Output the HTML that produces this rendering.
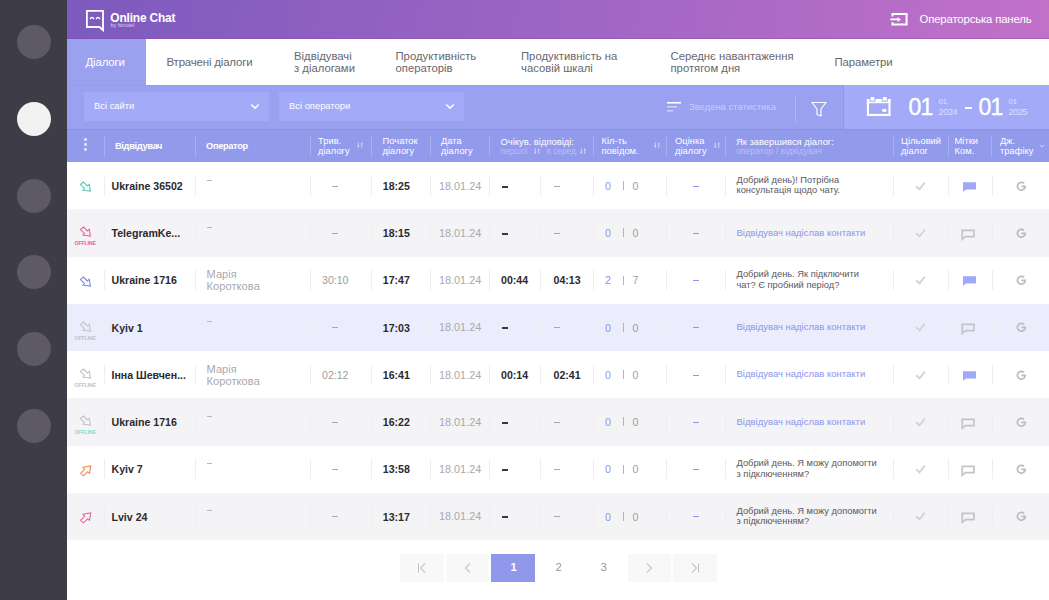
<!DOCTYPE html>
<html><head><meta charset="utf-8"><style>
html,body{margin:0;padding:0;width:1049px;height:600px;overflow:hidden;background:#fff;position:relative;font-family:"Liberation Sans", sans-serif;}
.t{position:absolute;white-space:nowrap;line-height:1;}
</style></head><body>
<div style="position:absolute;left:0px;top:0px;width:67px;height:600px;background:#3e3c46;"></div>
<div style="position:absolute;left:16.5px;top:25px;width:34px;height:34px;background:#5d5a65;border-radius:50%"></div>
<div style="position:absolute;left:16.5px;top:101.8px;width:34px;height:34px;background:#f2f2f2;border-radius:50%"></div>
<div style="position:absolute;left:16.5px;top:178.6px;width:34px;height:34px;background:#5d5a65;border-radius:50%"></div>
<div style="position:absolute;left:16.5px;top:255.39999999999998px;width:34px;height:34px;background:#5d5a65;border-radius:50%"></div>
<div style="position:absolute;left:16.5px;top:332.2px;width:34px;height:34px;background:#5d5a65;border-radius:50%"></div>
<div style="position:absolute;left:16.5px;top:409px;width:34px;height:34px;background:#5d5a65;border-radius:50%"></div>
<div style="position:absolute;left:67px;top:0px;width:982px;height:39px;background:linear-gradient(100deg,#7c5abe 0%,#9a64c3 45%,#c271c9 100%);"></div>
<div style="position:absolute;left:67px;top:38px;width:982px;height:1px;background:rgba(140,70,180,0.45);"></div>
<div style="position:absolute;left:67px;top:39px;width:982px;height:1px;background:rgba(160,110,200,0.25);"></div>
<svg style="position:absolute;left:84px;top:9px;" width="22" height="24" viewBox="0 0 22 24"><path d="M2.9 1.9 H19 V21.2 L15.6 18 H2.9 Z" fill="none" stroke="#fff" stroke-width="1.8" stroke-linejoin="miter"/><path d="M6.1 10 Q8 7.2 9.9 10 M12.1 10 Q14 7.2 15.9 10" fill="none" stroke="#fff" stroke-width="1.5"/></svg>
<div class="t" style="left:110.3px;top:12.53px;font-size:11.9px;color:#fff;font-weight:700;letter-spacing:-0.15px">Online Chat</div>
<div class="t" style="left:110.5px;top:23.06px;font-size:5.6px;color:rgba(255,255,255,0.7);font-weight:400;">by binotel</div>
<svg style="position:absolute;left:890px;top:12px;" width="19" height="15" viewBox="0 0 19 15"><path d="M2.5 4.6 V2.1 H16.6 V12.6 H2.5 V10.3" fill="none" stroke="#fff" stroke-width="2"/><path d="M0.4 6.6 H8 V8.2 H0.4 Z M7.6 5 L10.9 7.4 L7.6 9.9 Z" fill="#fff"/></svg>
<div class="t" style="left:919.5px;top:13.65px;font-size:11.4px;color:#fff;font-weight:400;letter-spacing:-0.17px">Операторська панель</div>
<div style="position:absolute;left:67px;top:39px;width:982px;height:46px;background:#ffffff;"></div>
<div style="position:absolute;left:67px;top:39px;width:79px;height:46px;background:#9aa2f0;"></div>
<div class="t" style="left:85.5px;top:56.97px;font-size:11.5px;color:#fff;font-weight:400;letter-spacing:-0.2px">Діалоги</div>
<div class="t" style="left:166.5px;top:56.97px;font-size:11.5px;color:#67676d;font-weight:400;letter-spacing:-0.2px">Втрачені діалоги</div>
<div class="t" style="left:294px;top:51.23px;font-size:11.3px;color:#67676d;font-weight:400;">Відвідувачі</div>
<div class="t" style="left:294px;top:62.63px;font-size:11.3px;color:#67676d;font-weight:400;">з діалогами</div>
<div class="t" style="left:395.5px;top:51.23px;font-size:11.3px;color:#67676d;font-weight:400;">Продуктивність</div>
<div class="t" style="left:395.5px;top:62.63px;font-size:11.3px;color:#67676d;font-weight:400;">операторів</div>
<div class="t" style="left:521px;top:51.23px;font-size:11.3px;color:#67676d;font-weight:400;">Продуктивність на</div>
<div class="t" style="left:521px;top:62.63px;font-size:11.3px;color:#67676d;font-weight:400;">часовій шкалі</div>
<div class="t" style="left:670.5px;top:51.23px;font-size:11.3px;color:#67676d;font-weight:400;">Середнє навантаження</div>
<div class="t" style="left:670.5px;top:62.63px;font-size:11.3px;color:#67676d;font-weight:400;">протягом дня</div>
<div class="t" style="left:834.5px;top:57.05px;font-size:11.4px;color:#67676d;font-weight:400;letter-spacing:-0.1px">Параметри</div>
<div style="position:absolute;left:67px;top:85px;width:982px;height:44px;background:#99a1f0;"></div>
<div style="position:absolute;left:67px;top:85px;width:982px;height:1px;background:#949cec;"></div>
<div style="position:absolute;left:67px;top:129px;width:982px;height:1px;background:#8a92e3;"></div>
<div style="position:absolute;left:84px;top:92px;width:185px;height:29px;background:#a3abf8;"></div>
<div class="t" style="left:94px;top:101.14px;font-size:9.4px;color:#fff;font-weight:400;">Всі сайти</div>
<svg style="position:absolute;left:249px;top:101px;" width="12" height="10" viewBox="0 0 12 10"><path d="M2.2 3.5 L6 7.1 L9.8 3.5" fill="none" stroke="#fff" stroke-width="1.5"/></svg>
<div style="position:absolute;left:279px;top:92px;width:185px;height:29px;background:#a3abf8;"></div>
<div class="t" style="left:289px;top:101.14px;font-size:9.4px;color:#fff;font-weight:400;">Всі оператори</div>
<svg style="position:absolute;left:444px;top:101px;" width="12" height="10" viewBox="0 0 12 10"><path d="M2.2 3.5 L6 7.1 L9.8 3.5" fill="none" stroke="#fff" stroke-width="1.5"/></svg>
<svg style="position:absolute;left:665px;top:100px;" width="18" height="14" viewBox="0 0 18 14"><rect x="2" y="2" width="14" height="1.6" fill="#fff"/><rect x="2" y="6" width="10" height="1.6" fill="rgba(255,255,255,0.5)"/><rect x="2" y="10" width="6" height="1.6" fill="rgba(255,255,255,0.5)"/></svg>
<div class="t" style="left:689px;top:102.40px;font-size:9.45px;color:#c9cdf9;font-weight:400;">Зведена статистика</div>
<div style="position:absolute;left:795px;top:97px;width:1px;height:25px;background:rgba(255,255,255,0.25);"></div>
<svg style="position:absolute;left:810px;top:100px;" width="18" height="18" viewBox="0 0 18 18"><path d="M2 2.5 H16 L11 9 V16 L7 14.5 V9 Z" fill="none" stroke="#fff" stroke-width="1.2" stroke-linejoin="round"/></svg>
<div style="position:absolute;left:843px;top:85px;width:1px;height:44px;background:#8f97e8;"></div>
<div style="position:absolute;left:844px;top:85px;width:205px;height:44px;background:#a3abf9;"></div>
<svg style="position:absolute;left:865px;top:95px;" width="28" height="24" viewBox="0 0 28 24"><rect x="1.9" y="4" width="23.6" height="4.2" fill="#fff"/><rect x="1.9" y="4" width="2.1" height="17" fill="#fff"/><rect x="23.4" y="4" width="2.1" height="17" fill="#fff"/><rect x="1.9" y="18.9" width="23.6" height="2.1" fill="#fff"/><rect x="5.1" y="1.4" width="4.8" height="4.8" fill="#fff" stroke="#9aa2f2" stroke-width="0.9"/><rect x="17.2" y="1.4" width="5" height="4.8" fill="#fff" stroke="#9aa2f2" stroke-width="0.9"/><rect x="17.3" y="14" width="4" height="2.8" fill="#fff"/></svg>
<div class="t" style="left:908.5px;top:95.73px;font-size:23px;color:#fff;font-weight:400;letter-spacing:-0.9px;-webkit-text-stroke:0.4px #fff">01</div>
<div class="t" style="left:938.5px;top:98.00px;font-size:7.8px;color:#dde0fc;font-weight:400;">01</div>
<div class="t" style="left:938.5px;top:108.18px;font-size:9px;color:#dde0fc;font-weight:400;letter-spacing:-0.3px">2024</div>
<div style="position:absolute;left:964.5px;top:106.5px;width:7px;height:2px;background:#fff;"></div>
<div class="t" style="left:978.5px;top:95.73px;font-size:23px;color:#fff;font-weight:400;letter-spacing:-0.9px;-webkit-text-stroke:0.4px #fff">01</div>
<div class="t" style="left:1008.5px;top:98.00px;font-size:7.8px;color:#dde0fc;font-weight:400;">01</div>
<div class="t" style="left:1008.5px;top:108.18px;font-size:9px;color:#dde0fc;font-weight:400;letter-spacing:-0.3px">2025</div>
<div style="position:absolute;left:67px;top:130px;width:982px;height:32px;background:#929aeb;"></div>
<div style="position:absolute;left:104px;top:136px;width:1px;height:20px;background:rgba(255,255,255,0.22);"></div>
<div style="position:absolute;left:195px;top:136px;width:1px;height:20px;background:rgba(255,255,255,0.22);"></div>
<div style="position:absolute;left:310px;top:136px;width:1px;height:20px;background:rgba(255,255,255,0.22);"></div>
<div style="position:absolute;left:371px;top:136px;width:1px;height:20px;background:rgba(255,255,255,0.22);"></div>
<div style="position:absolute;left:430px;top:136px;width:1px;height:20px;background:rgba(255,255,255,0.22);"></div>
<div style="position:absolute;left:489px;top:136px;width:1px;height:20px;background:rgba(255,255,255,0.22);"></div>
<div style="position:absolute;left:593px;top:136px;width:1px;height:20px;background:rgba(255,255,255,0.22);"></div>
<div style="position:absolute;left:666px;top:136px;width:1px;height:20px;background:rgba(255,255,255,0.22);"></div>
<div style="position:absolute;left:725px;top:136px;width:1px;height:20px;background:rgba(255,255,255,0.22);"></div>
<div style="position:absolute;left:893px;top:136px;width:1px;height:20px;background:rgba(255,255,255,0.22);"></div>
<div style="position:absolute;left:948px;top:136px;width:1px;height:20px;background:rgba(255,255,255,0.22);"></div>
<div style="position:absolute;left:991px;top:136px;width:1px;height:20px;background:rgba(255,255,255,0.22);"></div>
<div style="position:absolute;left:84px;top:138.3px;width:2.6px;height:2.6px;background:rgba(255,255,255,0.7);border-radius:50%"></div>
<div style="position:absolute;left:84px;top:143.3px;width:2.6px;height:2.6px;background:rgba(255,255,255,0.7);border-radius:50%"></div>
<div style="position:absolute;left:84px;top:148.3px;width:2.6px;height:2.6px;background:rgba(255,255,255,0.7);border-radius:50%"></div>
<div class="t" style="left:115px;top:141.93px;font-size:9.3px;color:#fff;font-weight:700;letter-spacing:-0.35px">Відвідувач</div>
<div class="t" style="left:206px;top:141.93px;font-size:9.3px;color:#fff;font-weight:700;letter-spacing:-0.35px">Оператор</div>
<div class="t" style="left:318px;top:136.73px;font-size:9.3px;color:#fff;font-weight:400;letter-spacing:0.05px">Трив.</div>
<div class="t" style="left:318px;top:146.53px;font-size:9.3px;color:#fff;font-weight:400;letter-spacing:0.05px">діалогу</div>
<svg style="position:absolute;left:357px;top:142px;" width="7" height="7" viewBox="0 0 7 7"><path d="M0.8 0.3 H1.7 V4 H0.8 Z M0 3.8 H2.5 L1.25 6.2 Z M4.3 2.2 H5.2 V6 H4.3 Z M3.5 2.4 H6 L4.75 0 Z" fill="rgba(255,255,255,0.6)"/></svg>
<div class="t" style="left:382.5px;top:136.73px;font-size:9.3px;color:#fff;font-weight:400;letter-spacing:0.05px">Початок</div>
<div class="t" style="left:382.5px;top:146.53px;font-size:9.3px;color:#fff;font-weight:400;letter-spacing:0.05px">діалогу</div>
<div class="t" style="left:441px;top:136.73px;font-size:9.3px;color:#fff;font-weight:400;letter-spacing:0.05px">Дата</div>
<div class="t" style="left:441px;top:146.53px;font-size:9.3px;color:#fff;font-weight:400;letter-spacing:0.05px">діалогу</div>
<div class="t" style="left:500.5px;top:136.64px;font-size:9.4px;color:#fff;font-weight:400;">Очікув. відповіді:</div>
<div class="t" style="left:500.5px;top:146.97px;font-size:8.3px;color:#b9bff4;font-weight:400;">першої</div>
<svg style="position:absolute;left:534.3px;top:147.6px;" width="7" height="7" viewBox="0 0 7 7"><path d="M0.8 0.3 H1.7 V4 H0.8 Z M0 3.8 H2.5 L1.25 6.2 Z M4.3 2.2 H5.2 V6 H4.3 Z M3.5 2.4 H6 L4.75 0 Z" fill="rgba(255,255,255,0.6)"/></svg>
<div class="t" style="left:546.5px;top:146.97px;font-size:8.3px;color:#b9bff4;font-weight:400;">в серед.</div>
<svg style="position:absolute;left:579.6px;top:147.6px;" width="7" height="7" viewBox="0 0 7 7"><path d="M0.8 0.3 H1.7 V4 H0.8 Z M0 3.8 H2.5 L1.25 6.2 Z M4.3 2.2 H5.2 V6 H4.3 Z M3.5 2.4 H6 L4.75 0 Z" fill="rgba(255,255,255,0.6)"/></svg>
<div class="t" style="left:601.5px;top:136.73px;font-size:9.3px;color:#fff;font-weight:400;letter-spacing:0.05px">Кіл-ть</div>
<div class="t" style="left:601.5px;top:146.53px;font-size:9.3px;color:#fff;font-weight:400;letter-spacing:0.05px">повідом.</div>
<svg style="position:absolute;left:654px;top:142px;" width="7" height="7" viewBox="0 0 7 7"><path d="M0.8 0.3 H1.7 V4 H0.8 Z M0 3.8 H2.5 L1.25 6.2 Z M4.3 2.2 H5.2 V6 H4.3 Z M3.5 2.4 H6 L4.75 0 Z" fill="rgba(255,255,255,0.6)"/></svg>
<div class="t" style="left:675px;top:136.73px;font-size:9.3px;color:#fff;font-weight:400;letter-spacing:0.05px">Оцінка</div>
<div class="t" style="left:675px;top:146.53px;font-size:9.3px;color:#fff;font-weight:400;letter-spacing:0.05px">діалогу</div>
<svg style="position:absolute;left:713.5px;top:142px;" width="7" height="7" viewBox="0 0 7 7"><path d="M0.8 0.3 H1.7 V4 H0.8 Z M0 3.8 H2.5 L1.25 6.2 Z M4.3 2.2 H5.2 V6 H4.3 Z M3.5 2.4 H6 L4.75 0 Z" fill="rgba(255,255,255,0.6)"/></svg>
<div class="t" style="left:736px;top:136.64px;font-size:9.4px;color:#fff;font-weight:400;">Як завершився діалог:</div>
<div class="t" style="left:736px;top:146.64px;font-size:8.7px;color:#b9bff4;font-weight:400;">оператор / відвідувач</div>
<div class="t" style="left:901px;top:136.73px;font-size:9.3px;color:#fff;font-weight:400;letter-spacing:0.05px">Цільовий</div>
<div class="t" style="left:901px;top:146.53px;font-size:9.3px;color:#fff;font-weight:400;letter-spacing:0.05px">діалог</div>
<div class="t" style="left:954.5px;top:136.73px;font-size:9.3px;color:#fff;font-weight:400;letter-spacing:0.05px">Мітки</div>
<div class="t" style="left:954.5px;top:146.53px;font-size:9.3px;color:#fff;font-weight:400;letter-spacing:0.05px">Ком.</div>
<div class="t" style="left:1000px;top:136.73px;font-size:9.3px;color:#fff;font-weight:400;letter-spacing:0.05px">Дж.</div>
<div class="t" style="left:1000px;top:146.53px;font-size:9.3px;color:#fff;font-weight:400;letter-spacing:0.05px">трафіку</div>
<svg style="position:absolute;left:1038px;top:143px;" width="8" height="6" viewBox="0 0 8 6"><path d="M1.8 1.8 L4 4 L6.2 1.8" fill="none" stroke="rgba(255,255,255,0.65)" stroke-width="0.9"/></svg>
<div style="position:absolute;left:67px;top:162px;width:982px;height:47.25px;background:#ffffff;"></div>
<div style="position:absolute;left:104px;top:175.625px;width:1px;height:20px;background:#eeeef1;"></div>
<div style="position:absolute;left:195px;top:175.625px;width:1px;height:20px;background:#eeeef1;"></div>
<div style="position:absolute;left:310px;top:175.625px;width:1px;height:20px;background:#eeeef1;"></div>
<div style="position:absolute;left:371px;top:175.625px;width:1px;height:20px;background:#eeeef1;"></div>
<div style="position:absolute;left:430px;top:175.625px;width:1px;height:20px;background:#eeeef1;"></div>
<div style="position:absolute;left:489px;top:175.625px;width:1px;height:20px;background:#eeeef1;"></div>
<div style="position:absolute;left:540px;top:175.625px;width:1px;height:20px;background:#eeeef1;"></div>
<div style="position:absolute;left:593px;top:175.625px;width:1px;height:20px;background:#eeeef1;"></div>
<div style="position:absolute;left:666px;top:175.625px;width:1px;height:20px;background:#eeeef1;"></div>
<div style="position:absolute;left:725px;top:175.625px;width:1px;height:20px;background:#eeeef1;"></div>
<div style="position:absolute;left:893px;top:175.625px;width:1px;height:20px;background:#eeeef1;"></div>
<div style="position:absolute;left:948px;top:175.625px;width:1px;height:20px;background:#eeeef1;"></div>
<div style="position:absolute;left:992px;top:175.625px;width:1px;height:20px;background:#eeeef1;"></div>
<svg style="position:absolute;left:72px;top:172.025px;" width="28" height="28" viewBox="0 0 28 28"><path d="M11.4 10 L15.4 14 L17.3 12.4 L18.4 19.1 L11 18.2 L12.6 16.6 L8.4 12.6 Z" fill="none" stroke="#5ec8b4" stroke-width="1.1" stroke-linejoin="miter"/></svg>
<div class="t" style="left:111.5px;top:180.75px;font-size:10.6px;color:#2a2a2f;font-weight:700;">Ukraine 36502</div>
<div style="position:absolute;left:207px;top:180px;width:5px;height:1px;background:#b8b8bc;"></div>
<div style="position:absolute;left:332px;top:186px;width:6px;height:1px;background:#a8a8ae;"></div>
<div class="t" style="left:382.8px;top:180.75px;font-size:10.6px;color:#2a2a2f;font-weight:700;">18:25</div>
<div class="t" style="left:439px;top:180.54px;font-size:10.85px;color:#a8a8ae;font-weight:400;">18.01.24</div>
<div style="position:absolute;left:502px;top:186px;width:5.5px;height:2px;background:#3a3a3e;"></div>
<div style="position:absolute;left:554px;top:186px;width:6px;height:1px;background:#a8a8ae;"></div>
<div class="t" style="left:605px;top:180.75px;font-size:10.6px;color:#8c95ea;font-weight:400;">0</div>
<div style="position:absolute;left:623px;top:181px;width:1px;height:9px;background:#b4b4b8;"></div>
<div class="t" style="left:632.5px;top:180.75px;font-size:10.6px;color:#9c9ca2;font-weight:400;">0</div>
<div style="position:absolute;left:693px;top:186px;width:6px;height:1px;background:#8c95ea;"></div>
<div class="t" style="left:736.5px;top:175.85px;font-size:9.3px;color:#58585e;font-weight:400;">Добрий день)! Потрібна</div>
<div class="t" style="left:736.5px;top:186.25px;font-size:9.3px;color:#58585e;font-weight:400;">консультація щодо чату.</div>
<svg style="position:absolute;left:912px;top:177.625px;" width="16" height="14" viewBox="0 0 16 14"><path d="M4.1 8.3 L7.5 11.3 L12.8 4.7" fill="none" stroke="#d4d4d8" stroke-width="1.9"/></svg>
<svg style="position:absolute;left:960px;top:179.625px;" width="18" height="14" viewBox="0 0 18 14"><path d="M3 2.3 H16 V9.5 H6.2 L3 11.8 Z" fill="#a0a8f8"/></svg>
<svg style="position:absolute;left:1014px;top:178.625px;" width="14" height="14" viewBox="0 0 14 14"><path d="M10.1 4.5 A3.9 3.9 0 1 0 11.2 7.4 H7.4" fill="none" stroke="#bcbcc0" stroke-width="1.7"/></svg>
<div style="position:absolute;left:67px;top:209.25px;width:982px;height:47.25px;background:#f4f4f6;"></div>
<div style="position:absolute;left:104px;top:222.875px;width:1px;height:20px;background:#eeeef1;"></div>
<div style="position:absolute;left:195px;top:222.875px;width:1px;height:20px;background:#eeeef1;"></div>
<div style="position:absolute;left:310px;top:222.875px;width:1px;height:20px;background:#eeeef1;"></div>
<div style="position:absolute;left:371px;top:222.875px;width:1px;height:20px;background:#eeeef1;"></div>
<div style="position:absolute;left:430px;top:222.875px;width:1px;height:20px;background:#eeeef1;"></div>
<div style="position:absolute;left:489px;top:222.875px;width:1px;height:20px;background:#eeeef1;"></div>
<div style="position:absolute;left:540px;top:222.875px;width:1px;height:20px;background:#eeeef1;"></div>
<div style="position:absolute;left:593px;top:222.875px;width:1px;height:20px;background:#eeeef1;"></div>
<div style="position:absolute;left:666px;top:222.875px;width:1px;height:20px;background:#eeeef1;"></div>
<div style="position:absolute;left:725px;top:222.875px;width:1px;height:20px;background:#eeeef1;"></div>
<div style="position:absolute;left:893px;top:222.875px;width:1px;height:20px;background:#eeeef1;"></div>
<div style="position:absolute;left:948px;top:222.875px;width:1px;height:20px;background:#eeeef1;"></div>
<div style="position:absolute;left:992px;top:222.875px;width:1px;height:20px;background:#eeeef1;"></div>
<svg style="position:absolute;left:72px;top:217.475px;" width="28" height="28" viewBox="0 0 28 28"><path d="M11.4 10 L15.4 14 L17.3 12.4 L18.4 19.1 L11 18.2 L12.6 16.6 L8.4 12.6 Z" fill="none" stroke="#f0609a" stroke-width="1.1" stroke-linejoin="miter"/></svg>
<div class="t" style="left:74.5px;top:241.20px;font-size:5.4px;color:#f0609a;font-weight:700;letter-spacing:-0.25px">OFFLINE</div>
<div class="t" style="left:111.5px;top:228.00px;font-size:10.6px;color:#2a2a2f;font-weight:700;">TelegramKe...</div>
<div style="position:absolute;left:207px;top:227px;width:5px;height:1px;background:#b8b8bc;"></div>
<div style="position:absolute;left:332px;top:233px;width:6px;height:1px;background:#a8a8ae;"></div>
<div class="t" style="left:382.8px;top:228.00px;font-size:10.6px;color:#2a2a2f;font-weight:700;">18:15</div>
<div class="t" style="left:439px;top:227.79px;font-size:10.85px;color:#a8a8ae;font-weight:400;">18.01.24</div>
<div style="position:absolute;left:502px;top:233px;width:5.5px;height:2px;background:#3a3a3e;"></div>
<div style="position:absolute;left:554px;top:233px;width:6px;height:1px;background:#a8a8ae;"></div>
<div class="t" style="left:605px;top:228.00px;font-size:10.6px;color:#8c95ea;font-weight:400;">0</div>
<div style="position:absolute;left:623px;top:228px;width:1px;height:9px;background:#b4b4b8;"></div>
<div class="t" style="left:632.5px;top:228.00px;font-size:10.6px;color:#9c9ca2;font-weight:400;">0</div>
<div style="position:absolute;left:693px;top:233px;width:6px;height:1px;background:#8c95ea;"></div>
<div class="t" style="left:736.5px;top:227.73px;font-size:9.5px;color:#8a94ee;font-weight:400;">Відвідувач надіслав контакти</div>
<svg style="position:absolute;left:912px;top:224.875px;" width="16" height="14" viewBox="0 0 16 14"><path d="M4.1 8.3 L7.5 11.3 L12.8 4.7" fill="none" stroke="#d4d4d8" stroke-width="1.9"/></svg>
<svg style="position:absolute;left:960px;top:226.675px;" width="18" height="14" viewBox="0 0 18 14"><path d="M2.25 3.35 H13.95 V9.65 H5.5 L2.25 12.3 Z" fill="none" stroke="#c4c4c8" stroke-width="1.7" stroke-linejoin="miter"/></svg>
<svg style="position:absolute;left:1014px;top:225.875px;" width="14" height="14" viewBox="0 0 14 14"><path d="M10.1 4.5 A3.9 3.9 0 1 0 11.2 7.4 H7.4" fill="none" stroke="#bcbcc0" stroke-width="1.7"/></svg>
<div style="position:absolute;left:67px;top:256.5px;width:982px;height:47.25px;background:#ffffff;"></div>
<div style="position:absolute;left:104px;top:270.125px;width:1px;height:20px;background:#eeeef1;"></div>
<div style="position:absolute;left:195px;top:270.125px;width:1px;height:20px;background:#eeeef1;"></div>
<div style="position:absolute;left:310px;top:270.125px;width:1px;height:20px;background:#eeeef1;"></div>
<div style="position:absolute;left:371px;top:270.125px;width:1px;height:20px;background:#eeeef1;"></div>
<div style="position:absolute;left:430px;top:270.125px;width:1px;height:20px;background:#eeeef1;"></div>
<div style="position:absolute;left:489px;top:270.125px;width:1px;height:20px;background:#eeeef1;"></div>
<div style="position:absolute;left:540px;top:270.125px;width:1px;height:20px;background:#eeeef1;"></div>
<div style="position:absolute;left:593px;top:270.125px;width:1px;height:20px;background:#eeeef1;"></div>
<div style="position:absolute;left:666px;top:270.125px;width:1px;height:20px;background:#eeeef1;"></div>
<div style="position:absolute;left:725px;top:270.125px;width:1px;height:20px;background:#eeeef1;"></div>
<div style="position:absolute;left:893px;top:270.125px;width:1px;height:20px;background:#eeeef1;"></div>
<div style="position:absolute;left:948px;top:270.125px;width:1px;height:20px;background:#eeeef1;"></div>
<div style="position:absolute;left:992px;top:270.125px;width:1px;height:20px;background:#eeeef1;"></div>
<svg style="position:absolute;left:72px;top:266.525px;" width="28" height="28" viewBox="0 0 28 28"><path d="M11.4 10 L15.4 14 L17.3 12.4 L18.4 19.1 L11 18.2 L12.6 16.6 L8.4 12.6 Z" fill="none" stroke="#7b8bea" stroke-width="1.1" stroke-linejoin="miter"/></svg>
<div class="t" style="left:111.5px;top:275.25px;font-size:10.6px;color:#2a2a2f;font-weight:700;">Ukraine 1716</div>
<div class="t" style="left:206.5px;top:269.21px;font-size:11px;color:#a8a8ae;font-weight:400;letter-spacing:0.1px">Марія</div>
<div class="t" style="left:206.5px;top:281.11px;font-size:11px;color:#a8a8ae;font-weight:400;letter-spacing:0.1px">Короткова</div>
<div class="t" style="left:322px;top:275.25px;font-size:10.6px;color:#9c9ca2;font-weight:400;">30:10</div>
<div class="t" style="left:382.8px;top:275.25px;font-size:10.6px;color:#2a2a2f;font-weight:700;">17:47</div>
<div class="t" style="left:439px;top:275.04px;font-size:10.85px;color:#a8a8ae;font-weight:400;">18.01.24</div>
<div class="t" style="left:501px;top:275.25px;font-size:10.6px;color:#2a2a2f;font-weight:700;">00:44</div>
<div class="t" style="left:553.5px;top:275.25px;font-size:10.6px;color:#2a2a2f;font-weight:700;">04:13</div>
<div class="t" style="left:605px;top:275.25px;font-size:10.6px;color:#8c95ea;font-weight:400;">2</div>
<div style="position:absolute;left:623px;top:276px;width:1px;height:9px;background:#b4b4b8;"></div>
<div class="t" style="left:632.5px;top:275.25px;font-size:10.6px;color:#9c9ca2;font-weight:400;">7</div>
<div style="position:absolute;left:693px;top:280px;width:6px;height:1px;background:#8c95ea;"></div>
<div class="t" style="left:736.5px;top:270.35px;font-size:9.3px;color:#58585e;font-weight:400;">Добрий день. Як підключити</div>
<div class="t" style="left:736.5px;top:280.75px;font-size:9.3px;color:#58585e;font-weight:400;">чат? Є пробний період?</div>
<svg style="position:absolute;left:912px;top:272.125px;" width="16" height="14" viewBox="0 0 16 14"><path d="M4.1 8.3 L7.5 11.3 L12.8 4.7" fill="none" stroke="#d4d4d8" stroke-width="1.9"/></svg>
<svg style="position:absolute;left:960px;top:274.125px;" width="18" height="14" viewBox="0 0 18 14"><path d="M3 2.3 H16 V9.5 H6.2 L3 11.8 Z" fill="#a0a8f8"/></svg>
<svg style="position:absolute;left:1014px;top:273.125px;" width="14" height="14" viewBox="0 0 14 14"><path d="M10.1 4.5 A3.9 3.9 0 1 0 11.2 7.4 H7.4" fill="none" stroke="#bcbcc0" stroke-width="1.7"/></svg>
<div style="position:absolute;left:67px;top:303.75px;width:982px;height:47.25px;background:#ebedfd;"></div>
<div style="position:absolute;left:104px;top:317.375px;width:1px;height:20px;background:#eeeef1;"></div>
<div style="position:absolute;left:195px;top:317.375px;width:1px;height:20px;background:#eeeef1;"></div>
<div style="position:absolute;left:310px;top:317.375px;width:1px;height:20px;background:#eeeef1;"></div>
<div style="position:absolute;left:371px;top:317.375px;width:1px;height:20px;background:#eeeef1;"></div>
<div style="position:absolute;left:430px;top:317.375px;width:1px;height:20px;background:#eeeef1;"></div>
<div style="position:absolute;left:489px;top:317.375px;width:1px;height:20px;background:#eeeef1;"></div>
<div style="position:absolute;left:540px;top:317.375px;width:1px;height:20px;background:#eeeef1;"></div>
<div style="position:absolute;left:593px;top:317.375px;width:1px;height:20px;background:#eeeef1;"></div>
<div style="position:absolute;left:666px;top:317.375px;width:1px;height:20px;background:#eeeef1;"></div>
<div style="position:absolute;left:725px;top:317.375px;width:1px;height:20px;background:#eeeef1;"></div>
<div style="position:absolute;left:893px;top:317.375px;width:1px;height:20px;background:#eeeef1;"></div>
<div style="position:absolute;left:948px;top:317.375px;width:1px;height:20px;background:#eeeef1;"></div>
<div style="position:absolute;left:992px;top:317.375px;width:1px;height:20px;background:#eeeef1;"></div>
<svg style="position:absolute;left:72px;top:311.97499999999997px;" width="28" height="28" viewBox="0 0 28 28"><path d="M11.4 10 L15.4 14 L17.3 12.4 L18.4 19.1 L11 18.2 L12.6 16.6 L8.4 12.6 Z" fill="none" stroke="#c4c4c8" stroke-width="1.1" stroke-linejoin="miter"/></svg>
<div class="t" style="left:74.5px;top:335.70px;font-size:5.4px;color:#c4c4c8;font-weight:700;letter-spacing:-0.25px">OFFLINE</div>
<div class="t" style="left:111.5px;top:322.50px;font-size:10.6px;color:#2a2a2f;font-weight:700;">Kyiv 1</div>
<div style="position:absolute;left:207px;top:321px;width:5px;height:1px;background:#b8b8bc;"></div>
<div style="position:absolute;left:332px;top:327px;width:6px;height:1px;background:#a8a8ae;"></div>
<div class="t" style="left:382.8px;top:322.50px;font-size:10.6px;color:#2a2a2f;font-weight:700;">17:03</div>
<div class="t" style="left:439px;top:322.29px;font-size:10.85px;color:#a8a8ae;font-weight:400;">18.01.24</div>
<div style="position:absolute;left:502px;top:327px;width:5.5px;height:2px;background:#3a3a3e;"></div>
<div style="position:absolute;left:554px;top:327px;width:6px;height:1px;background:#a8a8ae;"></div>
<div class="t" style="left:605px;top:322.50px;font-size:10.6px;color:#8c95ea;font-weight:400;">0</div>
<div style="position:absolute;left:623px;top:323px;width:1px;height:9px;background:#b4b4b8;"></div>
<div class="t" style="left:632.5px;top:322.50px;font-size:10.6px;color:#9c9ca2;font-weight:400;">0</div>
<div style="position:absolute;left:693px;top:327px;width:6px;height:1px;background:#8c95ea;"></div>
<div class="t" style="left:736.5px;top:322.23px;font-size:9.5px;color:#8a94ee;font-weight:400;">Відвідувач надіслав контакти</div>
<svg style="position:absolute;left:912px;top:319.375px;" width="16" height="14" viewBox="0 0 16 14"><path d="M4.1 8.3 L7.5 11.3 L12.8 4.7" fill="none" stroke="#d4d4d8" stroke-width="1.9"/></svg>
<svg style="position:absolute;left:960px;top:321.175px;" width="18" height="14" viewBox="0 0 18 14"><path d="M2.25 3.35 H13.95 V9.65 H5.5 L2.25 12.3 Z" fill="none" stroke="#c4c4c8" stroke-width="1.7" stroke-linejoin="miter"/></svg>
<svg style="position:absolute;left:1014px;top:320.375px;" width="14" height="14" viewBox="0 0 14 14"><path d="M10.1 4.5 A3.9 3.9 0 1 0 11.2 7.4 H7.4" fill="none" stroke="#bcbcc0" stroke-width="1.7"/></svg>
<div style="position:absolute;left:67px;top:351px;width:982px;height:47.25px;background:#ffffff;"></div>
<div style="position:absolute;left:104px;top:364.625px;width:1px;height:20px;background:#eeeef1;"></div>
<div style="position:absolute;left:195px;top:364.625px;width:1px;height:20px;background:#eeeef1;"></div>
<div style="position:absolute;left:310px;top:364.625px;width:1px;height:20px;background:#eeeef1;"></div>
<div style="position:absolute;left:371px;top:364.625px;width:1px;height:20px;background:#eeeef1;"></div>
<div style="position:absolute;left:430px;top:364.625px;width:1px;height:20px;background:#eeeef1;"></div>
<div style="position:absolute;left:489px;top:364.625px;width:1px;height:20px;background:#eeeef1;"></div>
<div style="position:absolute;left:540px;top:364.625px;width:1px;height:20px;background:#eeeef1;"></div>
<div style="position:absolute;left:593px;top:364.625px;width:1px;height:20px;background:#eeeef1;"></div>
<div style="position:absolute;left:666px;top:364.625px;width:1px;height:20px;background:#eeeef1;"></div>
<div style="position:absolute;left:725px;top:364.625px;width:1px;height:20px;background:#eeeef1;"></div>
<div style="position:absolute;left:893px;top:364.625px;width:1px;height:20px;background:#eeeef1;"></div>
<div style="position:absolute;left:948px;top:364.625px;width:1px;height:20px;background:#eeeef1;"></div>
<div style="position:absolute;left:992px;top:364.625px;width:1px;height:20px;background:#eeeef1;"></div>
<svg style="position:absolute;left:72px;top:359.22499999999997px;" width="28" height="28" viewBox="0 0 28 28"><path d="M11.4 10 L15.4 14 L17.3 12.4 L18.4 19.1 L11 18.2 L12.6 16.6 L8.4 12.6 Z" fill="none" stroke="#c4c4c8" stroke-width="1.1" stroke-linejoin="miter"/></svg>
<div class="t" style="left:74.5px;top:382.95px;font-size:5.4px;color:#c4c4c8;font-weight:700;letter-spacing:-0.25px">OFFLINE</div>
<div class="t" style="left:111.5px;top:369.75px;font-size:10.6px;color:#2a2a2f;font-weight:700;">Інна Шевчен...</div>
<div class="t" style="left:206.5px;top:363.71px;font-size:11px;color:#a8a8ae;font-weight:400;letter-spacing:0.1px">Марія</div>
<div class="t" style="left:206.5px;top:375.61px;font-size:11px;color:#a8a8ae;font-weight:400;letter-spacing:0.1px">Короткова</div>
<div class="t" style="left:322px;top:369.75px;font-size:10.6px;color:#9c9ca2;font-weight:400;">02:12</div>
<div class="t" style="left:382.8px;top:369.75px;font-size:10.6px;color:#2a2a2f;font-weight:700;">16:41</div>
<div class="t" style="left:439px;top:369.54px;font-size:10.85px;color:#a8a8ae;font-weight:400;">18.01.24</div>
<div class="t" style="left:501px;top:369.75px;font-size:10.6px;color:#2a2a2f;font-weight:700;">00:14</div>
<div class="t" style="left:553.5px;top:369.75px;font-size:10.6px;color:#2a2a2f;font-weight:700;">02:41</div>
<div class="t" style="left:605px;top:369.75px;font-size:10.6px;color:#8c95ea;font-weight:400;">0</div>
<div style="position:absolute;left:623px;top:370px;width:1px;height:9px;background:#b4b4b8;"></div>
<div class="t" style="left:632.5px;top:369.75px;font-size:10.6px;color:#9c9ca2;font-weight:400;">0</div>
<div style="position:absolute;left:693px;top:375px;width:6px;height:1px;background:#8c95ea;"></div>
<div class="t" style="left:736.5px;top:369.48px;font-size:9.5px;color:#8a94ee;font-weight:400;">Відвідувач надіслав контакти</div>
<svg style="position:absolute;left:912px;top:366.625px;" width="16" height="14" viewBox="0 0 16 14"><path d="M4.1 8.3 L7.5 11.3 L12.8 4.7" fill="none" stroke="#d4d4d8" stroke-width="1.9"/></svg>
<svg style="position:absolute;left:960px;top:368.625px;" width="18" height="14" viewBox="0 0 18 14"><path d="M3 2.3 H16 V9.5 H6.2 L3 11.8 Z" fill="#a0a8f8"/></svg>
<svg style="position:absolute;left:1014px;top:367.625px;" width="14" height="14" viewBox="0 0 14 14"><path d="M10.1 4.5 A3.9 3.9 0 1 0 11.2 7.4 H7.4" fill="none" stroke="#bcbcc0" stroke-width="1.7"/></svg>
<div style="position:absolute;left:67px;top:398.25px;width:982px;height:47.25px;background:#f4f4f6;"></div>
<div style="position:absolute;left:104px;top:411.875px;width:1px;height:20px;background:#eeeef1;"></div>
<div style="position:absolute;left:195px;top:411.875px;width:1px;height:20px;background:#eeeef1;"></div>
<div style="position:absolute;left:310px;top:411.875px;width:1px;height:20px;background:#eeeef1;"></div>
<div style="position:absolute;left:371px;top:411.875px;width:1px;height:20px;background:#eeeef1;"></div>
<div style="position:absolute;left:430px;top:411.875px;width:1px;height:20px;background:#eeeef1;"></div>
<div style="position:absolute;left:489px;top:411.875px;width:1px;height:20px;background:#eeeef1;"></div>
<div style="position:absolute;left:540px;top:411.875px;width:1px;height:20px;background:#eeeef1;"></div>
<div style="position:absolute;left:593px;top:411.875px;width:1px;height:20px;background:#eeeef1;"></div>
<div style="position:absolute;left:666px;top:411.875px;width:1px;height:20px;background:#eeeef1;"></div>
<div style="position:absolute;left:725px;top:411.875px;width:1px;height:20px;background:#eeeef1;"></div>
<div style="position:absolute;left:893px;top:411.875px;width:1px;height:20px;background:#eeeef1;"></div>
<div style="position:absolute;left:948px;top:411.875px;width:1px;height:20px;background:#eeeef1;"></div>
<div style="position:absolute;left:992px;top:411.875px;width:1px;height:20px;background:#eeeef1;"></div>
<svg style="position:absolute;left:72px;top:406.47499999999997px;" width="28" height="28" viewBox="0 0 28 28"><path d="M11.4 10 L15.4 14 L17.3 12.4 L18.4 19.1 L11 18.2 L12.6 16.6 L8.4 12.6 Z" fill="none" stroke="#c4c4c8" stroke-width="1.1" stroke-linejoin="miter"/></svg>
<div class="t" style="left:74.5px;top:430.20px;font-size:5.4px;color:#8fdcc8;font-weight:700;letter-spacing:-0.25px">OFFLINE</div>
<div class="t" style="left:111.5px;top:417.00px;font-size:10.6px;color:#2a2a2f;font-weight:700;">Ukraine 1716</div>
<div style="position:absolute;left:207px;top:416px;width:5px;height:1px;background:#b8b8bc;"></div>
<div style="position:absolute;left:332px;top:422px;width:6px;height:1px;background:#a8a8ae;"></div>
<div class="t" style="left:382.8px;top:417.00px;font-size:10.6px;color:#2a2a2f;font-weight:700;">16:22</div>
<div class="t" style="left:439px;top:416.79px;font-size:10.85px;color:#a8a8ae;font-weight:400;">18.01.24</div>
<div style="position:absolute;left:502px;top:422px;width:5.5px;height:2px;background:#3a3a3e;"></div>
<div style="position:absolute;left:554px;top:422px;width:6px;height:1px;background:#a8a8ae;"></div>
<div class="t" style="left:605px;top:417.00px;font-size:10.6px;color:#8c95ea;font-weight:400;">0</div>
<div style="position:absolute;left:623px;top:417px;width:1px;height:9px;background:#b4b4b8;"></div>
<div class="t" style="left:632.5px;top:417.00px;font-size:10.6px;color:#9c9ca2;font-weight:400;">0</div>
<div style="position:absolute;left:693px;top:422px;width:6px;height:1px;background:#8c95ea;"></div>
<div class="t" style="left:736.5px;top:416.73px;font-size:9.5px;color:#8a94ee;font-weight:400;">Відвідувач надіслав контакти</div>
<svg style="position:absolute;left:912px;top:413.875px;" width="16" height="14" viewBox="0 0 16 14"><path d="M4.1 8.3 L7.5 11.3 L12.8 4.7" fill="none" stroke="#d4d4d8" stroke-width="1.9"/></svg>
<svg style="position:absolute;left:960px;top:415.675px;" width="18" height="14" viewBox="0 0 18 14"><path d="M2.25 3.35 H13.95 V9.65 H5.5 L2.25 12.3 Z" fill="none" stroke="#c4c4c8" stroke-width="1.7" stroke-linejoin="miter"/></svg>
<svg style="position:absolute;left:1014px;top:414.875px;" width="14" height="14" viewBox="0 0 14 14"><path d="M10.1 4.5 A3.9 3.9 0 1 0 11.2 7.4 H7.4" fill="none" stroke="#bcbcc0" stroke-width="1.7"/></svg>
<div style="position:absolute;left:67px;top:445.5px;width:982px;height:47.25px;background:#ffffff;"></div>
<div style="position:absolute;left:104px;top:459.125px;width:1px;height:20px;background:#eeeef1;"></div>
<div style="position:absolute;left:195px;top:459.125px;width:1px;height:20px;background:#eeeef1;"></div>
<div style="position:absolute;left:310px;top:459.125px;width:1px;height:20px;background:#eeeef1;"></div>
<div style="position:absolute;left:371px;top:459.125px;width:1px;height:20px;background:#eeeef1;"></div>
<div style="position:absolute;left:430px;top:459.125px;width:1px;height:20px;background:#eeeef1;"></div>
<div style="position:absolute;left:489px;top:459.125px;width:1px;height:20px;background:#eeeef1;"></div>
<div style="position:absolute;left:540px;top:459.125px;width:1px;height:20px;background:#eeeef1;"></div>
<div style="position:absolute;left:593px;top:459.125px;width:1px;height:20px;background:#eeeef1;"></div>
<div style="position:absolute;left:666px;top:459.125px;width:1px;height:20px;background:#eeeef1;"></div>
<div style="position:absolute;left:725px;top:459.125px;width:1px;height:20px;background:#eeeef1;"></div>
<div style="position:absolute;left:893px;top:459.125px;width:1px;height:20px;background:#eeeef1;"></div>
<div style="position:absolute;left:948px;top:459.125px;width:1px;height:20px;background:#eeeef1;"></div>
<div style="position:absolute;left:992px;top:459.125px;width:1px;height:20px;background:#eeeef1;"></div>
<svg style="position:absolute;left:72px;top:455.525px;" width="28" height="28" viewBox="0 0 28 28"><path d="M11 11.2 L18.7 10 L17.5 17.3 L15.6 15.9 L11.4 19.8 L8.6 17.3 L12.6 13.3 Z" fill="none" stroke="#f08a50" stroke-width="1.1" stroke-linejoin="miter"/></svg>
<div class="t" style="left:111.5px;top:464.25px;font-size:10.6px;color:#2a2a2f;font-weight:700;">Kyiv 7</div>
<div style="position:absolute;left:207px;top:463px;width:5px;height:1px;background:#b8b8bc;"></div>
<div style="position:absolute;left:332px;top:469px;width:6px;height:1px;background:#a8a8ae;"></div>
<div class="t" style="left:382.8px;top:464.25px;font-size:10.6px;color:#2a2a2f;font-weight:700;">13:58</div>
<div class="t" style="left:439px;top:464.04px;font-size:10.85px;color:#a8a8ae;font-weight:400;">18.01.24</div>
<div style="position:absolute;left:502px;top:469px;width:5.5px;height:2px;background:#3a3a3e;"></div>
<div style="position:absolute;left:554px;top:469px;width:6px;height:1px;background:#a8a8ae;"></div>
<div class="t" style="left:605px;top:464.25px;font-size:10.6px;color:#8c95ea;font-weight:400;">0</div>
<div style="position:absolute;left:623px;top:465px;width:1px;height:9px;background:#b4b4b8;"></div>
<div class="t" style="left:632.5px;top:464.25px;font-size:10.6px;color:#9c9ca2;font-weight:400;">0</div>
<div style="position:absolute;left:693px;top:469px;width:6px;height:1px;background:#8c95ea;"></div>
<div class="t" style="left:736.5px;top:459.35px;font-size:9.3px;color:#58585e;font-weight:400;">Добрий день. Я можу допомогти</div>
<div class="t" style="left:736.5px;top:469.75px;font-size:9.3px;color:#58585e;font-weight:400;">з підключенням?</div>
<svg style="position:absolute;left:912px;top:461.125px;" width="16" height="14" viewBox="0 0 16 14"><path d="M4.1 8.3 L7.5 11.3 L12.8 4.7" fill="none" stroke="#d4d4d8" stroke-width="1.9"/></svg>
<svg style="position:absolute;left:960px;top:462.925px;" width="18" height="14" viewBox="0 0 18 14"><path d="M2.25 3.35 H13.95 V9.65 H5.5 L2.25 12.3 Z" fill="none" stroke="#c4c4c8" stroke-width="1.7" stroke-linejoin="miter"/></svg>
<svg style="position:absolute;left:1014px;top:462.125px;" width="14" height="14" viewBox="0 0 14 14"><path d="M10.1 4.5 A3.9 3.9 0 1 0 11.2 7.4 H7.4" fill="none" stroke="#bcbcc0" stroke-width="1.7"/></svg>
<div style="position:absolute;left:67px;top:492.75px;width:982px;height:47.25px;background:#f4f4f6;"></div>
<div style="position:absolute;left:104px;top:506.375px;width:1px;height:20px;background:#eeeef1;"></div>
<div style="position:absolute;left:195px;top:506.375px;width:1px;height:20px;background:#eeeef1;"></div>
<div style="position:absolute;left:310px;top:506.375px;width:1px;height:20px;background:#eeeef1;"></div>
<div style="position:absolute;left:371px;top:506.375px;width:1px;height:20px;background:#eeeef1;"></div>
<div style="position:absolute;left:430px;top:506.375px;width:1px;height:20px;background:#eeeef1;"></div>
<div style="position:absolute;left:489px;top:506.375px;width:1px;height:20px;background:#eeeef1;"></div>
<div style="position:absolute;left:540px;top:506.375px;width:1px;height:20px;background:#eeeef1;"></div>
<div style="position:absolute;left:593px;top:506.375px;width:1px;height:20px;background:#eeeef1;"></div>
<div style="position:absolute;left:666px;top:506.375px;width:1px;height:20px;background:#eeeef1;"></div>
<div style="position:absolute;left:725px;top:506.375px;width:1px;height:20px;background:#eeeef1;"></div>
<div style="position:absolute;left:893px;top:506.375px;width:1px;height:20px;background:#eeeef1;"></div>
<div style="position:absolute;left:948px;top:506.375px;width:1px;height:20px;background:#eeeef1;"></div>
<div style="position:absolute;left:992px;top:506.375px;width:1px;height:20px;background:#eeeef1;"></div>
<svg style="position:absolute;left:72px;top:502.775px;" width="28" height="28" viewBox="0 0 28 28"><path d="M11 11.2 L18.7 10 L17.5 17.3 L15.6 15.9 L11.4 19.8 L8.6 17.3 L12.6 13.3 Z" fill="none" stroke="#f0609a" stroke-width="1.1" stroke-linejoin="miter"/></svg>
<div class="t" style="left:111.5px;top:511.50px;font-size:10.6px;color:#2a2a2f;font-weight:700;">Lviv 24</div>
<div style="position:absolute;left:207px;top:510px;width:5px;height:1px;background:#b8b8bc;"></div>
<div style="position:absolute;left:332px;top:516px;width:6px;height:1px;background:#a8a8ae;"></div>
<div class="t" style="left:382.8px;top:511.50px;font-size:10.6px;color:#2a2a2f;font-weight:700;">13:17</div>
<div class="t" style="left:439px;top:511.29px;font-size:10.85px;color:#a8a8ae;font-weight:400;">18.01.24</div>
<div style="position:absolute;left:502px;top:516px;width:5.5px;height:2px;background:#3a3a3e;"></div>
<div style="position:absolute;left:554px;top:516px;width:6px;height:1px;background:#a8a8ae;"></div>
<div class="t" style="left:605px;top:511.50px;font-size:10.6px;color:#8c95ea;font-weight:400;">0</div>
<div style="position:absolute;left:623px;top:512px;width:1px;height:9px;background:#b4b4b8;"></div>
<div class="t" style="left:632.5px;top:511.50px;font-size:10.6px;color:#9c9ca2;font-weight:400;">0</div>
<div style="position:absolute;left:693px;top:516px;width:6px;height:1px;background:#8c95ea;"></div>
<div class="t" style="left:736.5px;top:506.60px;font-size:9.3px;color:#58585e;font-weight:400;">Добрий день. Я можу допомогти</div>
<div class="t" style="left:736.5px;top:517.00px;font-size:9.3px;color:#58585e;font-weight:400;">з підключенням?</div>
<svg style="position:absolute;left:912px;top:508.375px;" width="16" height="14" viewBox="0 0 16 14"><path d="M4.1 8.3 L7.5 11.3 L12.8 4.7" fill="none" stroke="#d4d4d8" stroke-width="1.9"/></svg>
<svg style="position:absolute;left:960px;top:510.175px;" width="18" height="14" viewBox="0 0 18 14"><path d="M2.25 3.35 H13.95 V9.65 H5.5 L2.25 12.3 Z" fill="none" stroke="#c4c4c8" stroke-width="1.7" stroke-linejoin="miter"/></svg>
<svg style="position:absolute;left:1014px;top:509.375px;" width="14" height="14" viewBox="0 0 14 14"><path d="M10.1 4.5 A3.9 3.9 0 1 0 11.2 7.4 H7.4" fill="none" stroke="#bcbcc0" stroke-width="1.7"/></svg>
<div style="position:absolute;left:400px;top:554px;width:43.8px;height:27.5px;background:#f8f8f8;"></div>
<div style="position:absolute;left:445.5px;top:554px;width:43.8px;height:27.5px;background:#f8f8f8;"></div>
<div style="position:absolute;left:491px;top:554px;width:43.8px;height:27.5px;background:#9098ec;"></div>
<div style="position:absolute;left:536.5px;top:554px;width:43.8px;height:27.5px;background:#ffffff;"></div>
<div style="position:absolute;left:582px;top:554px;width:43.8px;height:27.5px;background:#ffffff;"></div>
<div style="position:absolute;left:627.5px;top:554px;width:43.8px;height:27.5px;background:#f8f8f8;"></div>
<div style="position:absolute;left:673px;top:554px;width:43.8px;height:27.5px;background:#f8f8f8;"></div>
<div class="t" style="left:510.5px;top:562.03px;font-size:11.3px;color:#fff;font-weight:700;">1</div>
<div class="t" style="left:555.5px;top:562.03px;font-size:11.3px;color:#96969c;font-weight:400;">2</div>
<div class="t" style="left:600.5px;top:562.03px;font-size:11.3px;color:#96969c;font-weight:400;">3</div>
<svg style="position:absolute;left:414px;top:560px;" width="16" height="16" viewBox="0 0 16 16"><path d="M4.5 3.5 V12.5 M11 3.5 L6.5 8 L11 12.5" fill="none" stroke="#c6c6ca" stroke-width="1.1"/></svg>
<svg style="position:absolute;left:460px;top:560px;" width="16" height="16" viewBox="0 0 16 16"><path d="M10 3.5 L5.5 8 L10 12.5" fill="none" stroke="#c6c6ca" stroke-width="1.1"/></svg>
<svg style="position:absolute;left:641px;top:560px;" width="16" height="16" viewBox="0 0 16 16"><path d="M6 3.5 L10.5 8 L6 12.5" fill="none" stroke="#c6c6ca" stroke-width="1.1"/></svg>
<svg style="position:absolute;left:687px;top:560px;" width="16" height="16" viewBox="0 0 16 16"><path d="M11.5 3.5 V12.5 M5 3.5 L9.5 8 L5 12.5" fill="none" stroke="#c6c6ca" stroke-width="1.1"/></svg>
</body></html>
